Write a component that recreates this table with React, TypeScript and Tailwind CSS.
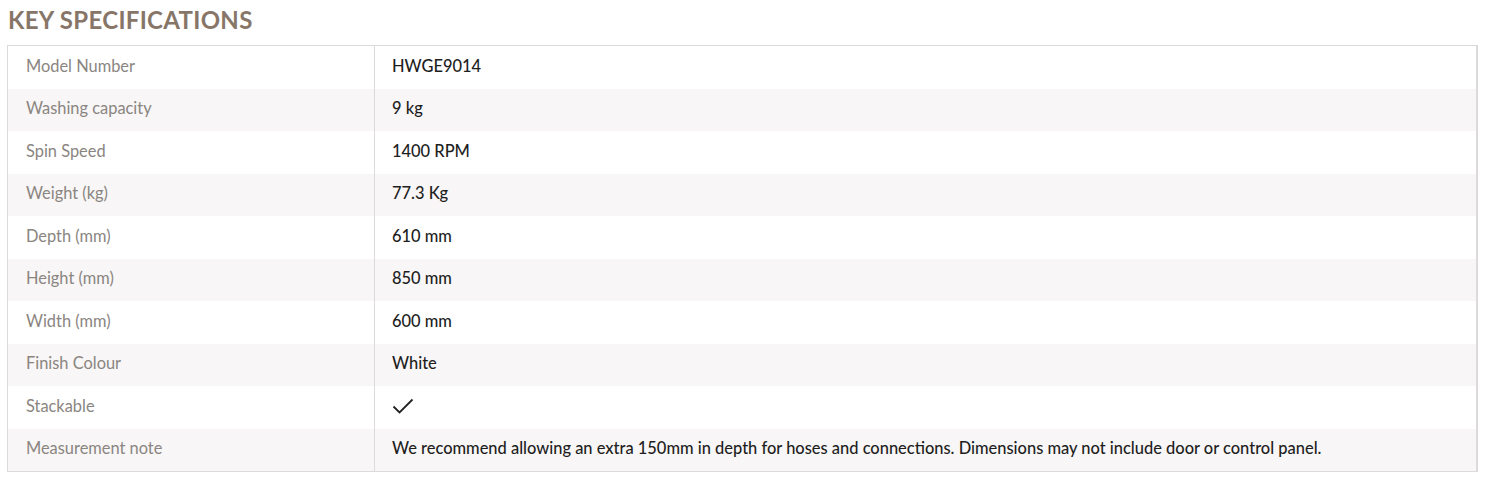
import React from "react";

const rows: { label: string; value: React.ReactNode }[] = [
  { label: "Model Number", value: "HWGE9014" },
  { label: "Washing capacity", value: "9 kg" },
  { label: "Spin Speed", value: "1400 RPM" },
  { label: "Weight (kg)", value: "77.3 Kg" },
  { label: "Depth (mm)", value: "610 mm" },
  { label: "Height (mm)", value: "850 mm" },
  { label: "Width (mm)", value: "600 mm" },
  { label: "Finish Colour", value: "White" },
  {
    label: "Stackable",
    value: (
      <svg width="22" height="18" viewBox="0 0 22 18" fill="none" className="mt-[-1px]">
        <path d="M1.5 9.5 L7.5 15.5 L20.5 2.5" stroke="#222" strokeWidth="1.8" />
      </svg>
    ),
  },
  {
    label: "Measurement note",
    value:
      "We recommend allowing an extra 150mm in depth for hoses and connections. Dimensions may not include door or control panel.",
  },
];

export default function App() {
  return (
    <div className="w-[1485px] h-[478px] bg-white font-['Lato',_sans-serif]">
      <div className="pl-[8px] pt-[6px] h-[45px]">
        <h2 className="text-[24px] leading-[28px] font-bold tracking-[0.3px] text-[#877668]">
          KEY SPECIFICATIONS
        </h2>
      </div>
      <div className="ml-[7px] w-[1471px] border-t border-l border-b border-r-2 border-[#dcdada]">
        {rows.map((r, i) => (
          <div
            key={r.label}
            className={`flex h-[42.5px] ${i % 2 === 1 ? "bg-[#f8f6f6]" : "bg-white"}`}
          >
            <div className="w-[367px] shrink-0 flex items-center pl-[18px] pb-[2px] text-[16.4px] text-[#8a8581] border-r border-[#dcdada]">
              {r.label}
            </div>
            <div className="flex-1 flex items-center pl-[17px] pb-[2px] text-[16.45px] font-medium text-[#1e1e1e]">
              {r.value}
            </div>
          </div>
        ))}
      </div>
    </div>
  );
}
